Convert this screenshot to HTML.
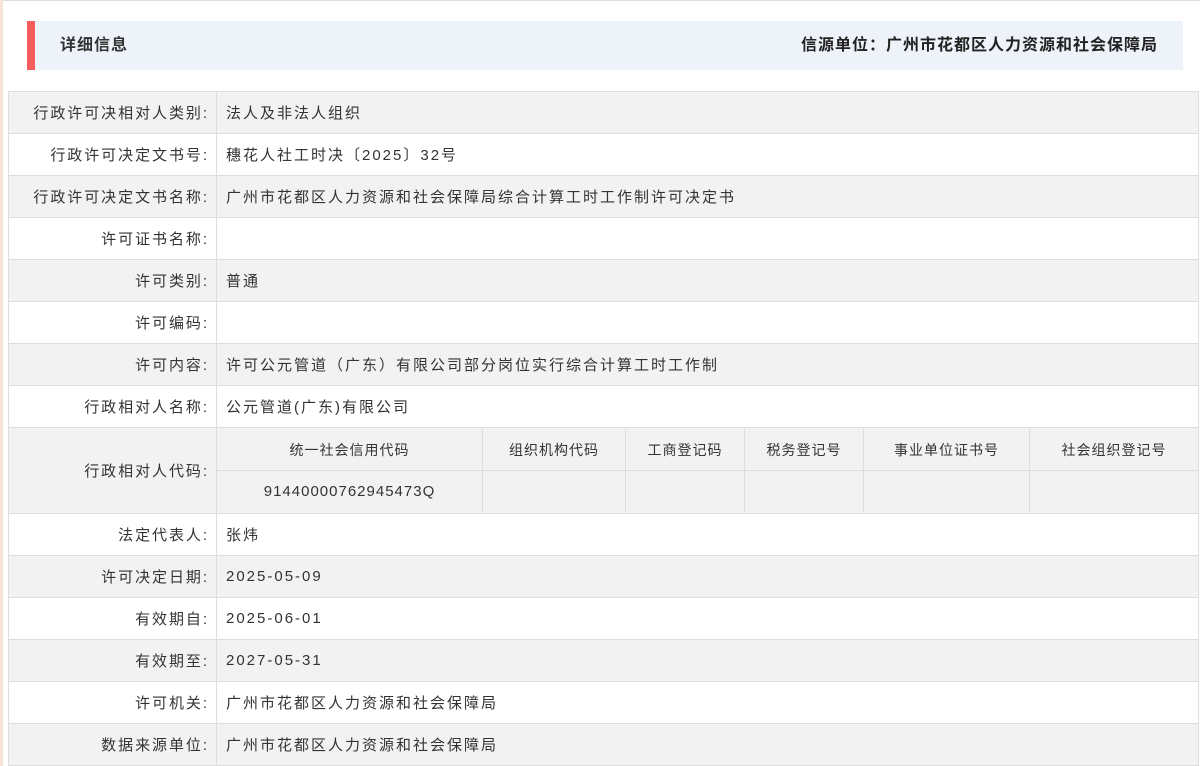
<!DOCTYPE html>
<html><head><meta charset="utf-8"><style>
html,body{margin:0;padding:0;background:#fff;}
body{width:1200px;height:766px;overflow:hidden;position:relative;font-family:"Liberation Sans","Noto Sans CJK SC",sans-serif;color:#333;}
.topline{position:absolute;left:0;top:0;width:1200px;height:1px;background:#ddd;}
.leftline{position:absolute;left:0;top:0;width:3px;height:766px;background:#f6e3da;}
.hdr{position:absolute;left:27px;top:21px;width:1156px;height:49px;background:#eef3fa;}
.hdr .bar{position:absolute;left:0;top:0;width:8px;height:49px;background:#f55d5d;}
.hdr .t{position:absolute;left:33px;top:0;line-height:49px;font-size:16px;font-weight:bold;color:#333;letter-spacing:1px;}
.hdr .r{position:absolute;right:25px;top:0;line-height:49px;font-size:16px;font-weight:bold;color:#222;letter-spacing:1px;}
table.main{position:absolute;left:8px;top:91px;width:1191px;border-collapse:collapse;font-size:15px;letter-spacing:2px;}
table.main>tbody>tr>td{border:1px solid #ddd;height:41px;padding:0;}
table.main>tbody>tr>td.l{width:200px;text-align:right;padding-right:7px;letter-spacing:1.95px;}
table.main>tbody>tr>td.v{padding-left:9px;}
table.main>tbody>tr.g{background:#f2f2f2;}
table.sub{width:100%;border-collapse:collapse;font-size:14px;letter-spacing:1px;}
table.sub td{border:1px solid #ddd;height:41px;text-align:center;padding:0;}
</style></head><body>
<div class="topline"></div><div class="leftline"></div>
<div class="hdr"><div class="bar"></div><div class="t">详细信息</div><div class="r">信源单位：广州市花都区人力资源和社会保障局</div></div>
<table class="main"><tbody>
<tr class="g"><td class="l">行政许可决相对人类别:</td><td class="v">法人及非法人组织</td></tr>
<tr><td class="l">行政许可决定文书号:</td><td class="v">穗花人社工时决〔2025〕32号</td></tr>
<tr class="g"><td class="l">行政许可决定文书名称:</td><td class="v">广州市花都区人力资源和社会保障局综合计算工时工作制许可决定书</td></tr>
<tr><td class="l">许可证书名称:</td><td class="v"></td></tr>
<tr class="g"><td class="l">许可类别:</td><td class="v">普通</td></tr>
<tr><td class="l">许可编码:</td><td class="v"></td></tr>
<tr class="g"><td class="l">许可内容:</td><td class="v">许可公元管道（广东）有限公司部分岗位实行综合计算工时工作制</td></tr>
<tr><td class="l">行政相对人名称:</td><td class="v">公元管道(广东)有限公司</td></tr>
<tr class="g"><td class="l" style="height:85px">行政相对人代码:</td><td style="padding:0">
<table class="sub"><tbody>
<tr><td style="width:265px;border-left:none;border-top:none">统一社会信用代码</td><td style="width:142px;border-top:none">组织机构代码</td><td style="width:118px;border-top:none">工商登记码</td><td style="width:118px;border-top:none">税务登记号</td><td style="width:165px;border-top:none">事业单位证书号</td><td style="border-top:none;border-right:none">社会组织登记号</td></tr>
<tr><td style="border-left:none;border-bottom:none;font-size:15px">91440000762945473Q</td><td style="border-bottom:none"></td><td style="border-bottom:none"></td><td style="border-bottom:none"></td><td style="border-bottom:none"></td><td style="border-bottom:none;border-right:none"></td></tr>
</tbody></table></td></tr>
<tr><td class="l">法定代表人:</td><td class="v">张炜</td></tr>
<tr class="g"><td class="l">许可决定日期:</td><td class="v">2025-05-09</td></tr>
<tr><td class="l">有效期自:</td><td class="v">2025-06-01</td></tr>
<tr class="g"><td class="l">有效期至:</td><td class="v">2027-05-31</td></tr>
<tr><td class="l">许可机关:</td><td class="v">广州市花都区人力资源和社会保障局</td></tr>
<tr class="g"><td class="l">数据来源单位:</td><td class="v">广州市花都区人力资源和社会保障局</td></tr>
</tbody></table>
</body></html>
